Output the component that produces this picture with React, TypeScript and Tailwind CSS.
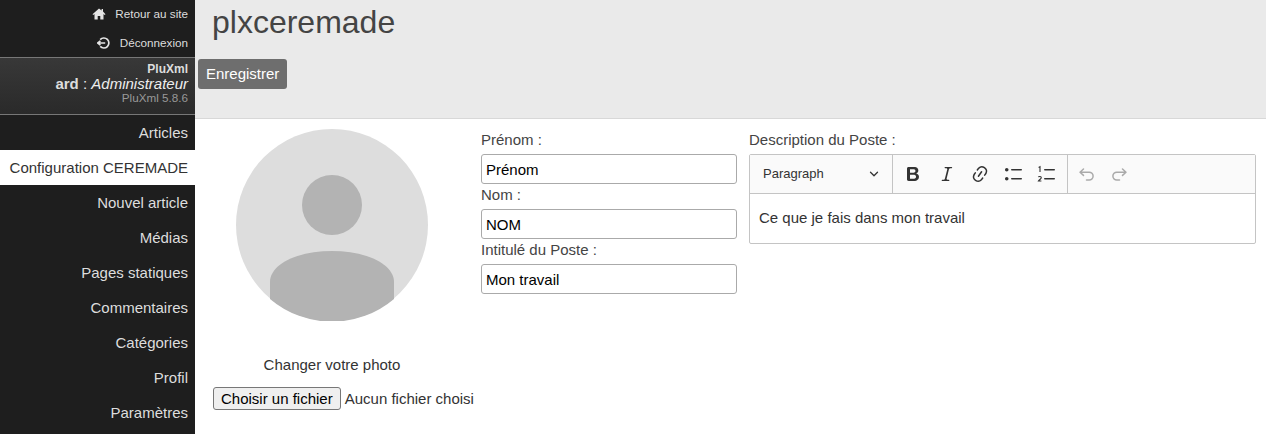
import { ChevronDown } from 'lucide-react'

const NAV = ['Articles', 'Configuration CEREMADE', 'Nouvel article', 'Médias', 'Pages statiques', 'Commentaires', 'Catégories', 'Profil', 'Paramètres']

function Field({ label, value }: { label: string; value: string }) {
  return (
    <label className="block">
      <span className="block h-[25px] pt-[1px] text-[15px] leading-[20px] text-[#444]">{label}</span>
      <input
        readOnly
        value={value}
        className="block h-[30px] w-[256px] rounded-[3px] border border-[#aaa] bg-white px-1 pt-[1px] text-[15px] text-black outline-none"
      />
    </label>
  )
}

// Editor toolbar icons, 20x20 like the editor's own set
function ToolIcon({ children }: { children: React.ReactNode }) {
  return <svg width="20" height="20" viewBox="0 0 20 20" fill="currentColor" className="shrink-0">{children}</svg>
}

export default function App() {
  return (
    <div className="flex h-[434px] w-[1266px] overflow-hidden bg-white font-['Liberation_Sans',Arial,sans-serif] text-[#333]">
      {/* sidebar */}
      <aside className="w-[195px] shrink-0 bg-[#1e1e1e] text-right">
        <div className="h-[57px] pr-[7px] text-[11.7px] text-[#ddd]">
          <div className="flex h-[28px] items-center justify-end gap-[9px]">
            <svg width="14" height="12" viewBox="0 0 14 12" fill="#e4e4e4"><path d="M7 0.5 0.5 6.2l.8.8L2.5 6v5.5h3.2V8h2.6v3.5h3.2V6l1.2 1 .8-.8L11 3.6V1H9.6v1.400z" /></svg>
            Retour au site
          </div>
          <div className="flex h-[29px] items-center justify-end gap-[9px]">
            <svg width="14" height="14" viewBox="0 0 14 14" fill="none" stroke="#e4e4e4" strokeWidth="1.7"><path d="M3.2 3.6A5 5 0 1 1 3.2 10.4" /><path d="M0.8 7H8M5.6 4.8 8.2 7l-2.6 2.2" transform="matrix(-1 0 0 1 9 0)" /></svg>
            Déconnexion
          </div>
        </div>
        <div className="h-[58px] border-y border-[#777] bg-gradient-to-b from-[#383838] to-[#2a2a2a] pr-[7px] pt-[4px] text-[15px] leading-[15px]">
          <div className="text-[12px] font-bold leading-[14px] text-[#ddd]">PluXml</div>
          <div className="text-[#eee]"><b className="font-bold text-[#ddd]">ard</b> : <i>Administrateur</i></div>
          <div className="text-[11.7px] leading-[14px] text-[#999]">PluXml 5.8.6</div>
        </div>
        <nav className="text-[15px]">
          {NAV.map((n) => (
            <div
              key={n}
              className={n === 'Configuration CEREMADE'
                ? 'h-[35px] bg-white pr-[7px] leading-[35px] text-[#333]'
                : 'h-[35px] pr-[7px] leading-[35px] text-[#ddd]'}
            >
              {n}
            </div>
          ))}
        </nav>
      </aside>

      <main className="min-w-0 flex-1">
        {/* header */}
        <header className="h-[119px] border-b border-[#d8d8d8] bg-[#eaeaea] pl-[3px]">
          <h1 className="h-[59px] pl-[14px] pt-[2px] text-[32px] leading-[40px] text-[#444]">plxceremade</h1>
          <button className="h-[30px] rounded-[3px] bg-[#6e6e6e] px-2 text-[15px] text-white">Enregistrer</button>
        </header>

        <div className="flex">
          {/* photo */}
          <div className="w-[286px] shrink-0 pl-[18px]">
            <svg className="ml-[23px] mt-[10px] block" width="192" height="192" viewBox="0 0 192 192">
              <circle cx="96" cy="96" r="96" fill="#dddddd" />
              <circle cx="96" cy="76" r="30" fill="#b3b3b3" />
              <path d="M34 170V153C34 135 62 122 96 122S158 135 158 153V170A96 96 0 0 1 34 170Z" fill="#b3b3b3" />
            </svg>
            <p className="mt-[35px] ml-[-1px] w-[240px] text-center text-[15px] leading-[18px] text-[#333]">Changer votre photo</p>
            <div className="mt-[13px] flex items-center gap-[4px] text-[15px] whitespace-nowrap">
              <button className="h-[23px] rounded-[3px] border border-[#777] bg-[#efefef] px-[7px] text-[15px] text-black">Choisir un fichier</button>
              <span className="pt-[1px]">Aucun fichier choisi</span>
            </div>
          </div>

          {/* identity fields */}
          <div className="w-[268px] shrink-0 pt-[10px]">
            <Field label="Prénom :" value="Prénom" />
            <Field label="Nom :" value="NOM" />
            <Field label="Intitulé du Poste :" value="Mon travail" />
          </div>

          {/* editor */}
          <div className="w-[507px] shrink-0 pt-[10px]">
            <div className="h-[25px] pt-[1px] text-[15px] leading-[20px] text-[#444]">Description du Poste :</div>
            <div className="rounded-[2px] border border-[#c4c4c4]">
              <div className="flex h-[39px] items-center border-b border-[#c4c4c4] bg-[#fafafa] text-[#333]">
                <div className="flex h-full w-[143px] items-center justify-between border-r border-[#c4c4c4] pl-[13px] pr-[11px] text-[13px]">
                  Paragraph
                  <ChevronDown size={14} strokeWidth={2.2} />
                </div>
                <div className="flex h-full w-[175px] items-center gap-[13.5px] border-r border-[#c4c4c4] pl-[10px]">
                  <ToolIcon><path d="M10.187 17H5.773c-.637 0-1.092-.138-1.364-.415-.273-.277-.409-.718-.409-1.323V4.738c0-.617.14-1.062.419-1.332.279-.27.73-.406 1.354-.406h4.68c.69 0 1.288.041 1.793.124.506.083.96.242 1.36.478.341.197.644.447.906.75a3.262 3.262 0 0 1 .808 2.162c0 1.401-.722 2.426-2.167 3.075C15.05 10.175 16 11.315 16 13.01a3.756 3.756 0 0 1-2.296 3.504 6.1 6.1 0 0 1-1.517.377c-.571.073-1.238.11-2 .11zm-.217-6.217H7v4.087h3.069c1.977 0 2.965-.69 2.965-2.072 0-.707-.256-1.22-.768-1.537-.512-.319-1.277-.478-2.296-.478zM7 5.13v3.619h2.606c.729 0 1.292-.067 1.69-.2a1.6 1.6 0 0 0 .91-.765c.165-.267.247-.566.247-.897 0-.707-.26-1.176-.778-1.409-.519-.232-1.31-.348-2.375-.348H7z" /></ToolIcon>
                  <ToolIcon><path d="m9.586 14.633.021.004c-.036.335.095.655.393.962.082.083.173.15.274.201h1.474a.6.6 0 1 1 0 1.2H5.304a.6.6 0 0 1 0-1.2h1.15c.474-.07.809-.182 1.005-.334.157-.122.291-.32.404-.597l2.416-9.55a1.053 1.053 0 0 0-.281-.823 1.12 1.12 0 0 0-.442-.296H8.15a.6.6 0 0 1 0-1.2h6.443a.6.6 0 1 1 0 1.2h-1.195c-.376.056-.65.155-.823.296-.215.175-.423.439-.623.79l-2.366 9.347z" /></ToolIcon>
                  <ToolIcon><path d="m11.077 15 .991-1.416a.75.75 0 1 1 1.229.86l-1.148 1.64a.748.748 0 0 1-.217.206 5.251 5.251 0 0 1-8.503-5.955.741.741 0 0 1 .12-.274l1.147-1.639a.75.75 0 1 1 1.228.86L4.933 10.7l.006.003a3.75 3.75 0 0 0 6.132 4.294l.006.004zm5.494-5.335a.748.748 0 0 1-.12.274l-1.147 1.639a.75.75 0 1 1-1.228-.86l.86-1.23a3.75 3.75 0 0 0-6.144-4.301l-.86 1.229a.75.75 0 0 1-1.229-.86l1.148-1.64a.748.748 0 0 1 .217-.206 5.251 5.251 0 0 1 8.503 5.955zm-4.563-2.532a.75.75 0 0 1 .184 1.045l-3.155 4.505a.75.75 0 1 1-1.229-.86l3.155-4.506a.75.75 0 0 1 1.045-.184z" /></ToolIcon>
                  <ToolIcon><path d="M7 5.75c0 .414.336.75.75.75h9.5a.75.75 0 1 0 0-1.5h-9.5a.75.75 0 0 0-.75.75zm-6 0C1 4.784 1.777 4 2.75 4c.966 0 1.75.777 1.75 1.75 0 .966-.777 1.75-1.75 1.75C1.784 7.5 1 6.723 1 5.75zm6 9c0 .414.336.75.75.75h9.5a.75.75 0 1 0 0-1.5h-9.5a.75.75 0 0 0-.75.75zm-6 0c0-.966.777-1.75 1.75-1.75.966 0 1.75.777 1.75 1.75 0 .966-.777 1.75-1.75 1.75-.966 0-1.75-.777-1.75-1.75z" /></ToolIcon>
                  <ToolIcon>
                    <path d="M7 5.75c0 .414.336.75.75.75h9.5a.75.75 0 1 0 0-1.5h-9.5a.75.75 0 0 0-.75.75zm0 9c0 .414.336.75.75.75h9.5a.75.75 0 1 0 0-1.5h-9.5a.75.75 0 0 0-.75.75z" />
                    <path d="M1.6 3.4 3 2.6V8M1.4 13.2c.3-1 2.9-1 2.9.5 0 1.2-2.2 2-2.9 3.3h3" fill="none" stroke="currentColor" strokeWidth="1.1" />
                  </ToolIcon>
                </div>
                <div className="flex items-center gap-[12px] pl-[9px] text-[#aaa]">
                  <ToolIcon><path d="M6.5 5 3 8.2l3.500 3.200M3 8.200h9.200a3.900 3.900 0 0 1 0 7.800H9.500" fill="none" stroke="currentColor" strokeWidth="1.5" strokeLinecap="round" strokeLinejoin="round" /></ToolIcon>
                  <ToolIcon><path d="M13.500 5 17 8.200l-3.500 3.200M17 8.200H7.800a3.900 3.900 0 0 0 0 7.800h2.700" fill="none" stroke="currentColor" strokeWidth="1.5" strokeLinecap="round" strokeLinejoin="round" /></ToolIcon>
                </div>
              </div>
              <div className="h-[49px] pl-[9px] pt-[14px] text-[15px] leading-[20px] text-[#333]">Ce que je fais dans mon travail</div>
            </div>
          </div>
        </div>
      </main>
    </div>
  )
}
